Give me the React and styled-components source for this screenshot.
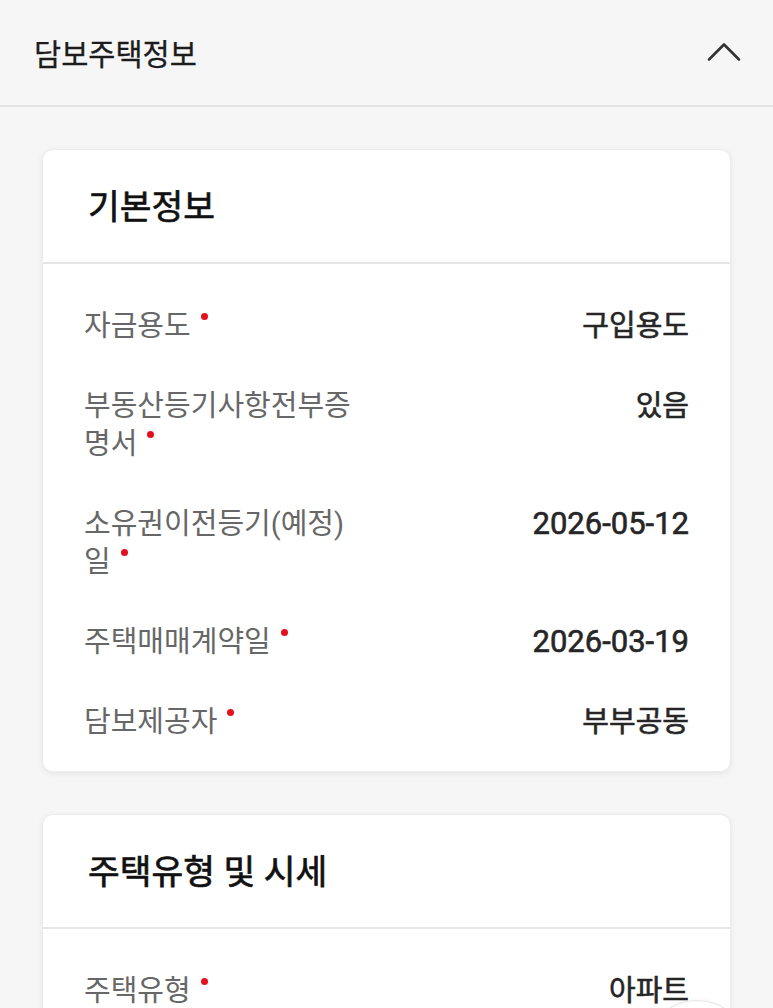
import React from "react";
import styled, { createGlobalStyle } from "styled-components";

const Global = createGlobalStyle`
  html, body { margin: 0; padding: 0; background: #f6f6f6; }
  body { font-family: Roboto, "Noto Sans CJK KR", sans-serif; -webkit-font-smoothing: antialiased; }
  * { box-sizing: border-box; }
`;

const Page = styled.div`
  min-height: 100vh;
  background: #f6f6f6;
`;

const Header = styled.header`
  height: 107px;
  display: flex;
  align-items: center;
  justify-content: space-between;
  padding: 0 32px 2px 34px;
  border-bottom: 2px solid #e4e4e4;
`;

const HeaderTitle = styled.h1`
  margin: 0;
  font-size: 29.5px;
  font-weight: 400;
  color: #1c1c1c;
  -webkit-text-stroke: 0.3px #1c1c1c;
`;

const ToggleButton = styled.button`
  border: 0;
  background: none;
  padding: 0;
  width: 34px;
  height: 24px;
  display: flex;
  align-items: center;
  justify-content: center;
  cursor: pointer;
`;

const Content = styled.main`
  display: flex;
  flex-direction: column;
  gap: 42px;
  padding: 42px 42px 120px;
`;

const Card = styled.section`
  background: #fff;
  border-radius: 11px;
  border: 1px solid #ececec;
  box-shadow: 0 2px 6px rgba(0, 0, 0, 0.07);
  overflow: hidden;
`;

const CardHeader = styled.div`
  height: 114px;
  display: flex;
  align-items: center;
  padding: 0 45px 4px;
  border-bottom: 2px solid #e6e6e6;
`;

const CardTitle = styled.h2`
  margin: 0;
  font-size: 34.5px;
  font-weight: 400;
  color: #111;
  -webkit-text-stroke: 0.7px #111;
`;

const CardBody = styled.div`
  padding: 22px 41px 9px 41px;
`;

const Row = styled.div`
  display: flex;
  justify-content: space-between;
  align-items: flex-start;
  padding: 21px 0;
  line-height: 38px;
`;

const Label = styled.div`
  max-width: 284px;
  font-size: 29px;
  color: #676767;
`;

const Tail = styled.span`
  white-space: nowrap;
`;

const Required = styled.span`
  display: inline-block;
  width: 7px;
  height: 7px;
  border-radius: 50%;
  background: #e5101d;
  margin: 6px 0 0 10px;
  vertical-align: top;
`;

const Value = styled.div`
  font-size: ${(p) => (p.$numeric ? "31px" : "29px")};
  font-weight: 400;
  color: #262626;
  -webkit-text-stroke: 0.6px #262626;
  text-align: right;
  white-space: nowrap;
`;

const FloatButton = styled.button`
  position: fixed;
  right: 24px;
  bottom: -96px;
  width: 104px;
  height: 104px;
  border-radius: 50%;
  background: #fff;
  border: 1px solid #e6e6e6;
  box-shadow: 0 0 4px rgba(0, 0, 0, 0.05);
  padding: 0;
`;

const ChevronUp = () => (
  <svg width="34" height="22" viewBox="0 0 34 22" fill="none">
    <path d="M2 18.5 L17 3.5 L32 18.5" stroke="#333" strokeWidth="2.6" strokeLinecap="round" strokeLinejoin="round" />
  </svg>
);

const basicInfo = [
  { label: "자금용도", value: "구입용도" },
  { label: "부동산등기사항전부증명서", value: "있음" },
  { label: "소유권이전등기(예정)일", value: "2026-05-12", numeric: true },
  { label: "주택매매계약일", value: "2026-03-19", numeric: true },
  { label: "담보제공자", value: "부부공동" },
];

const houseInfo = [{ label: "주택유형", value: "아파트" }];

const RequiredLabel = ({ text }) => (
  <Label>
    {text.slice(0, -1)}
    <Tail>
      {text.slice(-1)}
      <Required />
    </Tail>
  </Label>
);

const InfoCard = ({ title, rows }) => (
  <Card>
    <CardHeader>
      <CardTitle>{title}</CardTitle>
    </CardHeader>
    <CardBody>
      {rows.map((r) => (
        <Row key={r.label}>
          <RequiredLabel text={r.label} />
          <Value $numeric={r.numeric}>{r.value}</Value>
        </Row>
      ))}
    </CardBody>
  </Card>
);

export default function App() {
  return (
    <Page>
      <Global />
      <Header>
        <HeaderTitle>담보주택정보</HeaderTitle>
        <ToggleButton aria-label="접기">
          <ChevronUp />
        </ToggleButton>
      </Header>
      <Content>
        <InfoCard title="기본정보" rows={basicInfo} />
        <InfoCard title="주택유형 및 시세" rows={houseInfo} />
      </Content>
      <FloatButton aria-label="맨 위로" />
    </Page>
  );
}
